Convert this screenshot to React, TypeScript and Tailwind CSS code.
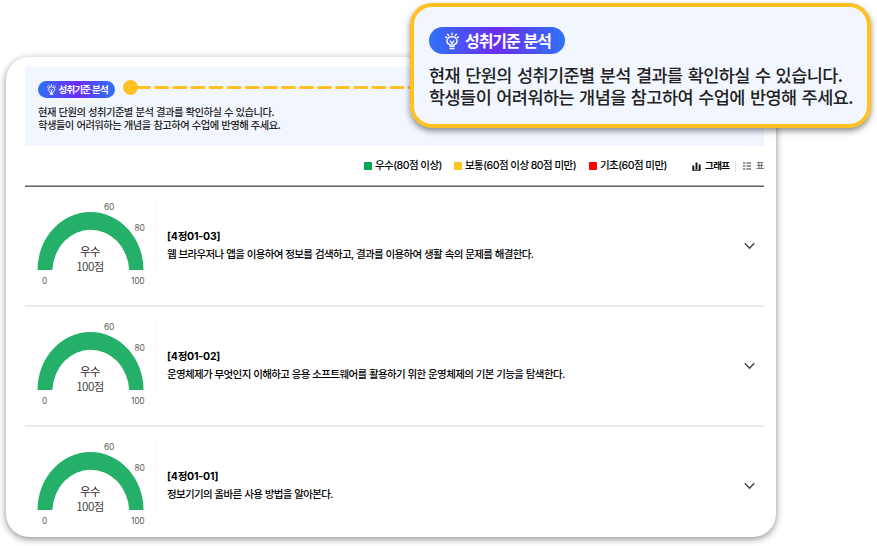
import React from "react";

function Bulb({ className }: { className: string }) {
  return (
    <svg className={className} viewBox="0 0 14 17" fill="none" stroke="white" strokeWidth="1.4" strokeLinecap="round" strokeLinejoin="round">
      <path d="M7 .7v1.6M2.8 1.8l1 1.500M11.2 1.8l-1 1.500M.7 4.500l1 .5M13.3 4.500l-1 .5" />
      <path d="M5 14v-1.800C3.300 11.400 1.900 10.400 1.900 8.900a5.100 4.700 0 0 1 10.200 0c0 1.500-1.400 2.500-3.100 3.300V14z" />
      <path d="M5.200 8.600 7 10.600l1.800-2M7 10.600v3.400M5 16.100h4" />
    </svg>
  );
}

function Gauge() {
  return (
    <div className="relative h-[118px] w-[130px] shrink-0 text-[#5f5f5f]">
      <svg className="block h-[118px] w-[130px]" viewBox="0 0 130 118">
        <path d="M12.500 83A53 58 0 0 1 118.500 83H104.200A38.500 42.500 0 0 0 27.300 83Z" fill="#24b068" />
      </svg>
      <span className="absolute left-[79px] top-[14px] text-[8.500px] leading-3 tracking-[-0.3px]">60</span>
      <span className="absolute left-[109.500px] top-[35px] text-[8.500px] leading-3 tracking-[-0.3px]">80</span>
      <span className="absolute left-[17px] top-[88px] text-[8.500px] leading-3">0</span>
      <span className="absolute left-[106px] top-[88px] text-[8.500px] leading-3 tracking-[-0.3px]">100</span>
      <div className="absolute left-[35px] top-[57px] w-[60px] text-center font-['Noto_Sans_CJK_KR',sans-serif] text-[11.500px] leading-[15px] tracking-[-0.6px] text-[#444]">
        <div className="h-[15px] text-[#222]">우수</div>
        <div className="h-[15px]">100점</div>
      </div>
    </div>
  );
}

const rows = [
  { code: "[4정01-03]", text: "웹 브라우저나 앱을 이용하여 정보를 검색하고, 결과를 이용하여 생활 속의 문제를 해결한다." },
  { code: "[4정01-02]", text: "운영체제가 무엇인지 이해하고 응용 소프트웨어를 활용하기 위한 운영체제의 기본 기능을 탐색한다." },
  { code: "[4정01-01]", text: "정보기기의 올바른 사용 방법을 알아본다." },
];

function Row({ code, text }: { code: string; text: string }) {
  return (
    <div className="flex h-[120px] shrink-0 border-b-2 border-[#ebebeb]">
      <Gauge />
      <div className="mt-[14px] h-[71px] w-px bg-[#f7f7f7]" />
      <div className="ml-[11px] mt-[42px] flex-1 whitespace-nowrap text-black">
        <div className="text-[10.500px] font-bold leading-[16px] tracking-[-0.2px]">{code}</div>
        <div className="mt-[2px] text-[10.500px] font-medium leading-[16px] tracking-[-0.650px] [word-spacing:0.400px]">{text}</div>
      </div>
      <svg className="mr-[9px] mt-[55px] h-[8px] w-[11px]" viewBox="0 0 11 8" fill="none" stroke="#444" strokeWidth="1.4">
        <path d="M.8 1.300 5.500 6.300 10.200 1.300" />
      </svg>
    </div>
  );
}

function Legend({ color, label, className }: { color: string; label: string; className: string }) {
  return (
    <div className={"flex items-center gap-[3px] " + className}>
      <span className={"mb-px size-2 rounded-[1px] " + color} />
      <span>{label}</span>
    </div>
  );
}

export default function App() {
  return (
    <div className="relative h-[546px] w-[877px] overflow-hidden bg-white font-['Inter','Noto_Sans_CJK_KR',sans-serif]">
      <div className="pl-[6px] pt-[57px]">
        <div className="flex h-[480px] w-[770px] flex-col overflow-hidden rounded-[23px] bg-white pl-[19px] pr-[12px] pt-[10px] shadow-[0_2px_7px_rgba(0,0,0,0.45)]">
          <div className="h-[79px] shrink-0 bg-[#f2f6ff] pl-[13px] pt-[14px] font-['Noto_Sans_CJK_KR',sans-serif]">
            <div className="flex h-[17px] w-[77px] items-center rounded-full bg-[linear-gradient(90deg,#2f72f8,#6a2df7_50%,#2f72f8)] pl-[9px] text-white">
              <Bulb className="h-[11px] w-[9px]" />
              <span className="ml-[2.500px] whitespace-nowrap text-[9.500px] font-bold leading-[17px] tracking-[-0.800px] [word-spacing:0.500px]">성취기준 분석</span>
            </div>
            <div className="mt-[6.500px] whitespace-nowrap text-[10.300px] font-medium leading-[13.500px] tracking-[-0.520px] text-[#222] [word-spacing:0.850px]">
              <div>현재 단원의 성취기준별 분석 결과를 확인하실 수 있습니다.</div>
              <div>학생들이 어려워하는 개념을 참고하여 수업에 반영해 주세요.</div>
            </div>
          </div>
          <div className="flex h-[41px] shrink-0 items-center justify-end whitespace-nowrap border-b border-[#666] shadow-[0_-1px_0_#aaa_inset] text-[10.500px] font-medium leading-4 tracking-[-0.540px] text-black">
            <Legend color="bg-[#00a651]" label="우수(80점 이상)" className="w-[90px]" />
            <Legend color="bg-[#ffc222]" label="보통(60점 이상 80점 미만)" className="w-[135px]" />
            <Legend color="bg-[#ff0000]" label="기초(60점 미만)" className="w-[103px]" />
            <svg className="h-[9px] w-[9px]" viewBox="0 0 9 9" fill="none" stroke="#111">
              <path d="M1.300 3.500v4.500M4.500 .500v7M7.700 2.500v5.500" strokeWidth="1.900" />
              <path d="M.3 8.200h8.400" strokeWidth="1" />
            </svg>
            <span className="ml-[4px] w-[25px] text-[9.500px] font-bold tracking-[-0.600px]">그래프</span>
            <span className="ml-[5px] h-[11px] w-px bg-[#e2e2e2]" />
            <svg className="ml-[7px] h-[8px] w-[8px]" viewBox="0 0 8 8" fill="#999">
              <path d="M0 0h2.500v2H0zM3.500 0H8v2H3.500zM0 3h2.500v2H0zM3.500 3H8v2H3.500zM0 6h2.500v2H0zM3.500 6H8v2H3.500z" />
            </svg>
            <span className="ml-[5px] w-[8px] text-[9px] text-[#666]">표</span>
          </div>
          {rows.map((r) => (
            <Row key={r.code} code={r.code} text={r.text} />
          ))}
        </div>
      </div>

      <svg className="absolute left-[120px] top-[78px] h-[20px] w-[300px]" viewBox="120 78 300 20">
        <path d="M130 87.500H149.500" stroke="#ffc222" strokeWidth="3" strokeLinecap="round" />
        <path d="M155.800 87.500H420" stroke="#ffc222" strokeWidth="3" strokeLinecap="round" strokeDasharray="12 6.080" />
        <circle cx="130.500" cy="87.500" r="7.400" fill="#ffc222" />
      </svg>

      <div className="absolute left-[410px] top-[3px] h-[125px] w-[461px] rounded-[22px] border-4 border-[#ffc222] bg-[#f2f6ff] pl-[15px] pt-[20px] font-['Noto_Sans_CJK_KR',sans-serif] shadow-[0_3px_6px_rgba(0,0,0,0.45)]">
        <div className="flex h-[27px] w-[136px] items-center rounded-full bg-[linear-gradient(90deg,#2f72f8,#6a2df7_50%,#2f72f8)] pl-[16px] text-white">
          <Bulb className="h-[18px] w-[14px]" />
          <span className="ml-[6px] whitespace-nowrap text-[16px] font-bold leading-[27px] tracking-[-1.050px] [word-spacing:1.300px]">성취기준 분석</span>
        </div>
        <div className="mt-[10px] whitespace-nowrap text-[17.500px] font-medium leading-[22px] tracking-[-0.550px] text-[#222] [word-spacing:1.700px]">
          <div className="h-[22px]">현재 단원의 성취기준별 분석 결과를 확인하실 수 있습니다.</div>
          <div className="h-[22px]">학생들이 어려워하는 개념을 참고하여 수업에 반영해 주세요.</div>
        </div>
      </div>
    </div>
  );
}
